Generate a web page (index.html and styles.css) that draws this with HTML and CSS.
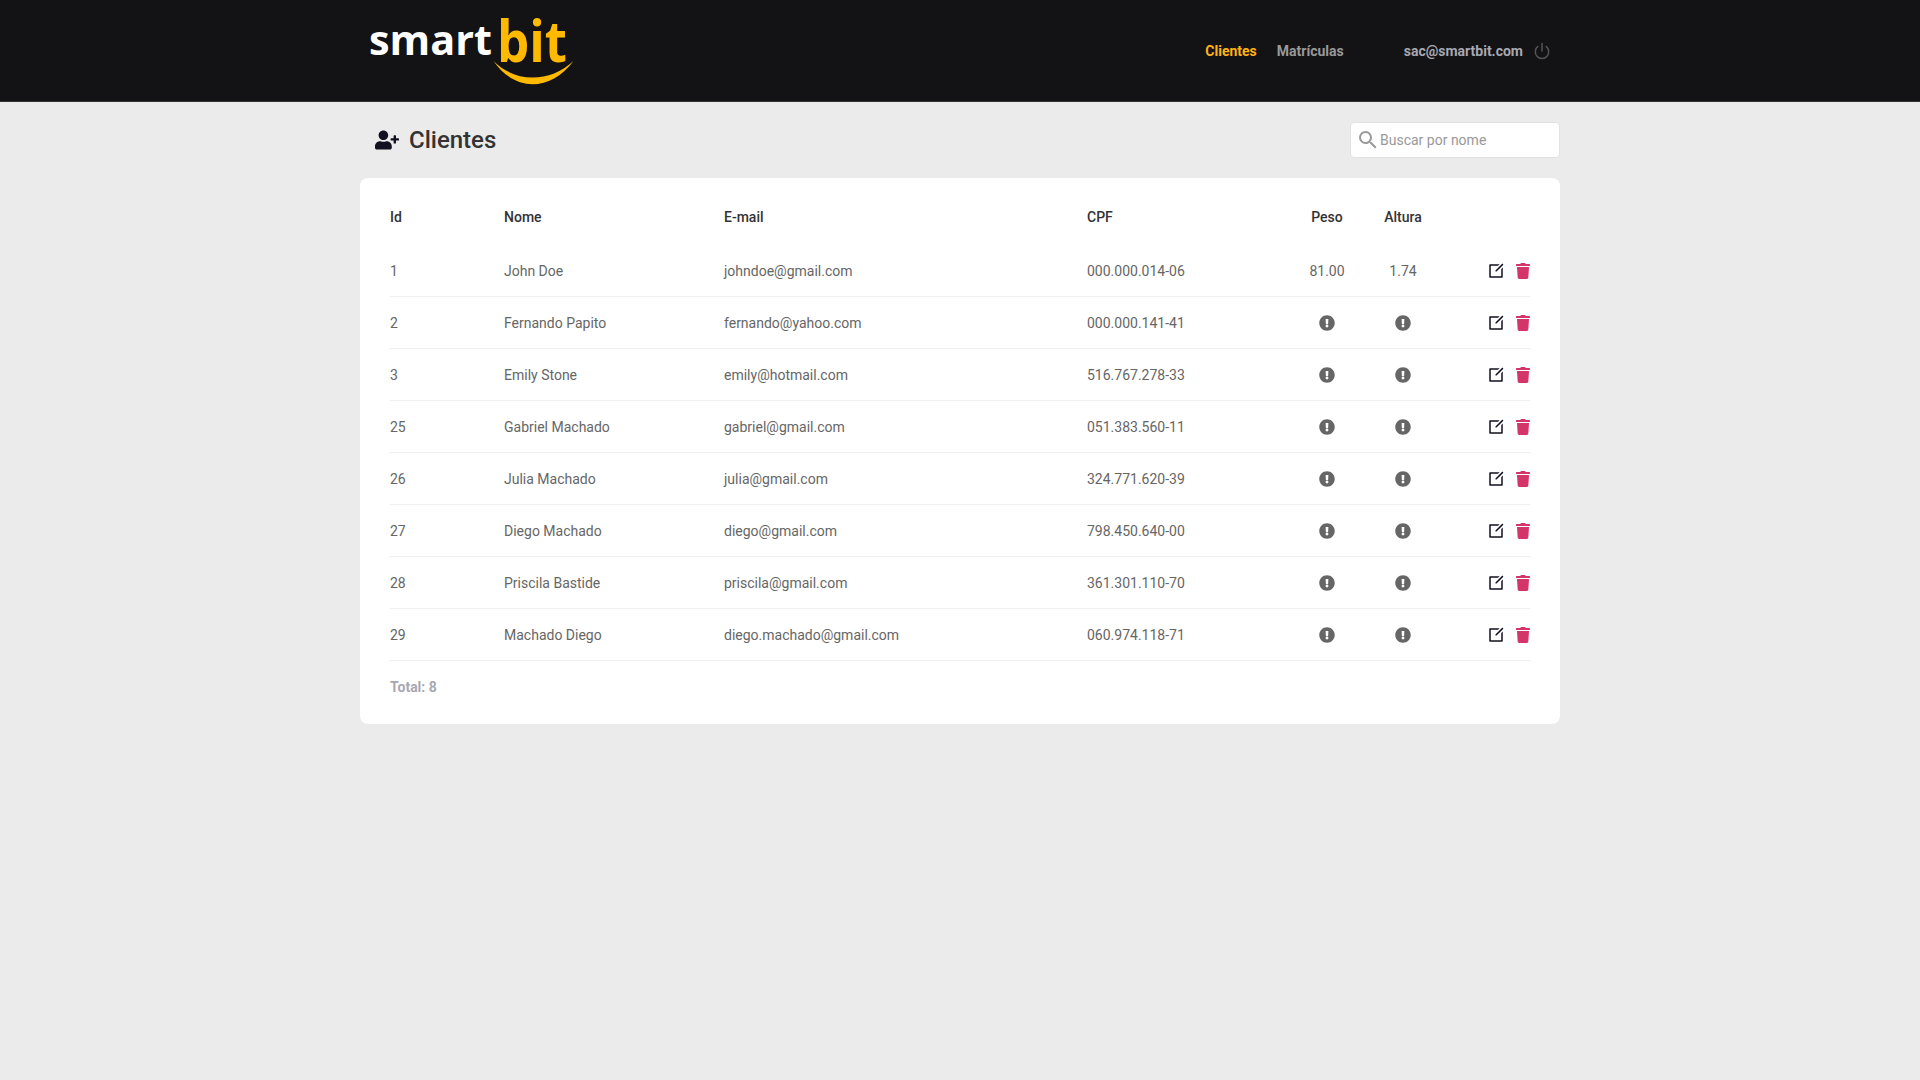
FILE: index.html
```html
<!DOCTYPE html>
<html lang="pt-BR">
<head>
<meta charset="utf-8">
<title>Smartbit</title>
<link rel="stylesheet" href="styles.css">
</head>
<body>
<svg class="sprite" aria-hidden="true">
  <symbol id="edit" viewBox="0 0 24 24"><path d="M16.757 3l-2 2H5v14h14V9.243l2-2V20a1 1 0 0 1-1 1H4a1 1 0 0 1-1-1V4a1 1 0 0 1 1-1h12.757zm3.728-.9L21.900 3.515l-9.192 9.192-1.412.003-.002-1.417L20.485 2.100z"/></symbol>
  <symbol id="trash" viewBox="0 0 448 512"><path d="M432 32H312l-9.400-18.700A24 24 0 0 0 281.100 0H166.800a23.700 23.700 0 0 0-21.400 13.300L136 32H16A16 16 0 0 0 0 48v32a16 16 0 0 0 16 16h416a16 16 0 0 0 16-16V48a16 16 0 0 0-16-16zM53.200 467a48 48 0 0 0 47.900 45h245.800a48 48 0 0 0 47.900-45L416 128H32z"/></symbol>
  <symbol id="alert" viewBox="0 0 512 512"><path d="M504 256c0 137-111 248-248 248S8 393 8 256 119 8 256 8s248 111 248 248zm-248 50c-25.400 0-46 20.600-46 46s20.600 46 46 46 46-20.600 46-46-20.600-46-46-46zm-43.700-165.300l7.400 136c.4 6.400 5.600 11.300 12 11.300h48.500c6.400 0 11.600-5 12-11.300l7.400-136c.4-6.900-5.100-12.700-12-12.700h-63.400c-6.900 0-12.300 5.800-11.900 12.700z"/></symbol>
</svg>
<header class="topbar">
  <div class="container topbar-inner">
    <svg class="logo" width="210" height="76" viewBox="0 0 210 76" role="img" aria-label="smartbit">
      <text class="logo-smart" x="9" y="42" textLength="123" lengthAdjust="spacingAndGlyphs">smart</text>
      <text class="logo-bit" x="137" y="49" textLength="70" lengthAdjust="spacingAndGlyphs">bit</text>
      <path class="logo-smile" d="M133.500 48C155 70 190 70 213.500 48C190 79 155 79 133.500 48z"/>
    </svg>
    <nav class="nav">
      <a class="nav-link active">Clientes</a>
      <a class="nav-link">Matrículas</a>
    </nav>
    <div class="account">
      <span>sac@smartbit.com</span>
      <svg class="power" width="16" height="18" viewBox="0 0 16 18"><path d="M8 1v8.500M4.300 4.200a6.700 6.700 0 1 0 7.400 0"/></svg>
    </div>
  </div>
</header>
<main class="container">
  <div class="page-head">
    <svg class="add-user" width="24" height="20" viewBox="0 0 640 512"><path d="M624 208h-64v-64c0-8.800-7.200-16-16-16h-32c-8.800 0-16 7.200-16 16v64h-64c-8.800 0-16 7.200-16 16v32c0 8.800 7.200 16 16 16h64v64c0 8.800 7.200 16 16 16h32c8.800 0 16-7.200 16-16v-64h64c8.800 0 16-7.200 16-16v-32c0-8.800-7.200-16-16-16zm-400 48c70.700 0 128-57.300 128-128S294.700 0 224 0 96 57.300 96 128s57.300 128 128 128zm89.600 32h-16.700c-22.200 10.200-46.900 16-72.900 16s-50.600-5.800-72.900-16h-16.700C60.200 288 0 348.200 0 422.400V464c0 26.500 21.500 48 48 48h352c26.500 0 48-21.500 48-48v-41.600c0-74.200-60.200-134.400-134.400-134.400z"/></svg>
    <h1>Clientes</h1>
    <label class="search">
      <svg width="24" height="24" viewBox="0 0 24 24"><path d="M15.500 14h-.79l-.28-.27A6.471 6.471 0 0 0 16 9.500 6.500 6.500 0 1 0 9.500 16c1.610 0 3.090-.59 4.230-1.570l.27.28v.79l5 4.990L20.490 19l-4.990-5zm-6 0C7.010 14 5 11.990 5 9.500S7.010 5 9.500 5 14 7.010 14 9.500 11.990 14 9.500 14z"/></svg>
      <input type="text" placeholder="Buscar por nome">
    </label>
  </div>
  <section class="card">
    <table>
      <colgroup><col class="c-id"><col class="c-name"><col class="c-mail"><col class="c-cpf"><col class="c-num"><col class="c-num"><col class="c-act"></colgroup>
      <thead><tr><th>Id</th><th>Nome</th><th>E-mail</th><th>CPF</th><th class="num">Peso</th><th class="num">Altura</th><th></th></tr></thead>
      <tbody id="rows"></tbody>
    </table>
    <p class="total">Total: 8</p>
  </section>
</main>
<script src="script.js"></script>
</body>
</html>
```
FILE: styles.css
```css
* { box-sizing: border-box; margin: 0; padding: 0; }
body { background: #ebebeb; font-family: Roboto, "Liberation Sans", sans-serif; font-size: 14px; color: #666; }
.sprite { display: none; }
.container { width: 1200px; margin: 0 auto; }
.topbar { height: 102px; background: #131315; border-bottom: 1px solid #333; }
.topbar-inner { height: 101px; display: flex; align-items: center; padding-right: 10px; }
.logo { margin-right: auto; overflow: visible; }
.logo-smart { font: bold 42px "Open Sans", sans-serif; fill: #fff; }
.logo-bit { font: bold 58px "Open Sans", sans-serif; fill: #ffba00; }
.logo-smile { fill: #ffba00; }
.nav { display: flex; gap: 20px; margin-right: 60px; }
.nav-link { font-weight: bold; color: #999; }
.nav-link.active { color: #ffb215; }
.account { display: flex; align-items: center; gap: 11px; font-weight: bold; color: #a8a8b3; }
.power { fill: none; stroke: #555; stroke-width: 1.5; }
.page-head { height: 76px; display: flex; align-items: center; padding-left: 15px; }
.add-user { fill: #13111f; }
h1 { margin-left: 10px; font-size: 24px; font-weight: 500; color: #333; }
.search { width: 210px; height: 36px; margin-left: auto; display: flex; align-items: center; padding-left: 5px; background: #fff; border: 1px solid #e2e2e2; border-radius: 4px; }
.search svg { fill: #999; }
.search input { width: 160px; border: 0; outline: 0; background: none; font: 14px Roboto, sans-serif; }
.search input::placeholder { color: #999; }
.card { height: 546px; background: #fff; border-radius: 8px; padding: 30px; }
table { width: 1140px; table-layout: fixed; border-collapse: separate; border-spacing: 0; }
.c-id { width: 114px; }
.c-name { width: 220px; }
.c-mail { width: 363px; }
.c-cpf { width: 202px; }
.c-num { width: 76px; }
.c-act { width: 89px; }
th { height: 37px; text-align: left; vertical-align: top; font-weight: 500; color: #333; line-height: 18px; }
td { height: 52px; border-bottom: 1px solid #f0f0f0; vertical-align: middle; }
.num { text-align: center; }
.alert { fill: #666; display: block; margin: 0 auto; }
.actions { display: flex; justify-content: flex-end; align-items: center; gap: 11px; }
.edit { fill: #13111f; }
.trash { fill: #d33569; }
.total { padding-top: 17px; line-height: 18px; font-weight: bold; color: #a8a8b3; }
```
FILE: script.js
```js
const clients = [
  [1, "John Doe", "johndoe@gmail.com", "000.000.014-06", "81.00", "1.74"],
  [2, "Fernando Papito", "fernando@yahoo.com", "000.000.141-41"],
  [3, "Emily Stone", "emily@hotmail.com", "516.767.278-33"],
  [25, "Gabriel Machado", "gabriel@gmail.com", "051.383.560-11"],
  [26, "Julia Machado", "julia@gmail.com", "324.771.620-39"],
  [27, "Diego Machado", "diego@gmail.com", "798.450.640-00"],
  [28, "Priscila Bastide", "priscila@gmail.com", "361.301.110-70"],
  [29, "Machado Diego", "diego.machado@gmail.com", "060.974.118-71"]
];
const alertIcon = '<svg class="alert" width="16" height="16"><use href="#alert"/></svg>';
document.getElementById("rows").innerHTML = clients.map(([id, name, mail, cpf, weight, height]) =>
  `<tr><td>${id}</td><td>${name}</td><td>${mail}</td><td>${cpf}</td>
  <td class="num">${weight || alertIcon}</td><td class="num">${height || alertIcon}</td>
  <td><div class="actions"><svg class="edit" width="18" height="18"><use href="#edit"/></svg><svg class="trash" width="14" height="16"><use href="#trash"/></svg></div></td></tr>`
).join("");
```
